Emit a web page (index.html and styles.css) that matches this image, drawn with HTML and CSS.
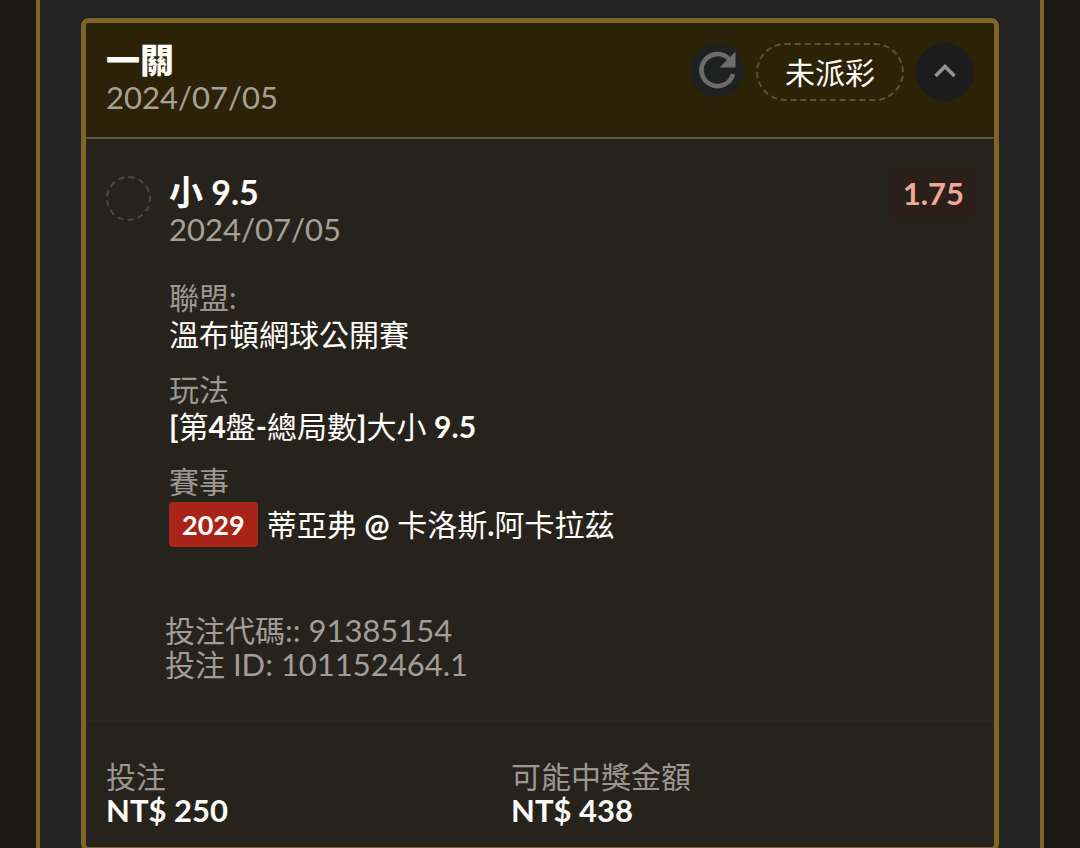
FILE: index.html
```html
<!DOCTYPE html>
<html lang="zh-Hant">
<head>
  <meta charset="UTF-8" />
  <meta name="viewport" content="width=device-width, initial-scale=1.0"/>
  <title>投注紀錄</title>
  <link rel="stylesheet" href="styles.css">
</head>
<body>
  <main class="panel">
    <article class="bet-card">
      <!-- Header -->
      <header class="bet-header">
        <div class="heading">
          <h2 class="title heavy">一關</h2>
          <time class="date" datetime="2024-07-05">2024/07/05</time>
        </div>
        <div class="actions">
          <button class="refresh" type="button" aria-label="重新整理">
            <svg width="40" height="40" viewBox="0 0 40 40">
              <path d="M36 24 A16 16 0 1 1 32.5 9.5" fill="none" stroke="#6c6c6e" stroke-width="4.6"/>
              <path d="M38.5 1.5 V17.5 H22.5 Z" fill="#6c6c6e"/>
            </svg>
          </button>
          <span class="status">未派彩</span>
          <button class="toggle" type="button" aria-label="收合">
            <svg width="24" height="16" viewBox="0 0 24 16">
              <path d="M2.5 12 L12 2.5 L21.5 12" fill="none" stroke="#949494" stroke-width="3.6"/>
            </svg>
          </button>
        </div>
      </header>

      <!-- Selection -->
      <section class="leg">
        <span class="marker"></span>
        <div class="leg-main">
          <div class="leg-top">
            <div class="heading">
              <h3 class="title">小 9.5</h3>
              <time class="date" datetime="2024-07-05">2024/07/05</time>
            </div>
            <span class="odds">1.75</span>
          </div>
          <dl class="fields">
            <div class="field">
              <dt>聯盟:</dt>
              <dd>溫布頓網球公開賽</dd>
            </div>
            <div class="field">
              <dt>玩法</dt>
              <dd><b>[</b>第<b>4</b>盤<b>-</b>總局數<b>]</b>大小 <b>9.5</b></dd>
            </div>
            <div class="field">
              <dt>賽事</dt>
              <dd class="match"><span class="badge">2029</span><span>蒂亞弗 <b>@</b> 卡洛斯<b>.</b>阿卡拉茲</span></dd>
            </div>
          </dl>
        </div>
      </section>
      <div class="codes">
        <p>投注代碼<span class="num">:: 91385154</span></p>
        <p>投注<span class="num"> ID: 101152464.1</span></p>
      </div>

      <!-- Totals -->
      <footer class="totals">
        <div>
          <p class="label">投注</p>
          <p class="amount">NT$ 250</p>
        </div>
        <div>
          <p class="label">可能中獎金額</p>
          <p class="amount">NT$ 438</p>
        </div>
      </footer>
    </article>
  </main>
</body>
</html>
```
FILE: styles.css
```css
* {
  box-sizing: border-box;
}

body {
  margin: 0;
  height: 100vh;
  overflow: hidden;
  background: #1c1912;
  color: #fdfcf8;
  font-family: Lato, "Noto Sans CJK TC", sans-serif;
  font-size: 30px;
  line-height: 37px;
}

h2, h3, p, dl, dd {
  margin: 0;
}

.panel {
  min-height: 100%;
  margin: 0 36px;
  padding: 18px 41px;
  border: solid #7f6527;
  border-width: 0 4px;
  background: #232323;
}

.bet-card {
  border: 5px solid #7f6527;
  border-radius: 8px;
  background: #26231d;
}

/* Header */
.bet-header {
  display: flex;
  justify-content: space-between;
  align-items: flex-start;
  padding: 18px 20px 21px;
  border-bottom: 2px solid #5d5541;
  border-radius: 3px 3px 0 0;
  background: #2c2207;
}

.title {
  font-size: 34px;
  line-height: 38px;
  font-weight: 700;
}

.heavy {
  font-weight: 900;
}

.num {
  font-size: 31px;
}

.date {
  display: block;
  color: #a6a198;
  font-size: 31px;
  line-height: 37px;
}

.actions {
  display: flex;
  align-items: flex-start;
  gap: 12px;
  padding-top: 2px;
}

.actions button {
  display: flex;
  justify-content: center;
  align-items: center;
  padding: 0;
  border: none;
  border-radius: 50%;
  cursor: pointer;
}

.refresh {
  width: 54px;
  height: 54px;
  background: #1f2020;
}

.status {
  height: 58px;
  padding: 0 27px;
  border: 2px dashed #5c5139;
  border-radius: 29px;
  line-height: 54px;
}

.toggle {
  width: 58px;
  height: 58px;
  background: #1c1c1c;
}

/* Selection */
.leg {
  display: flex;
  gap: 18px;
  padding: 34px 26px 0 20px;
}

.marker {
  flex: none;
  width: 45px;
  height: 45px;
  margin-top: 3px;
  border: 2px dashed #4e4a43;
  border-radius: 50%;
}

.leg-main {
  flex: 1;
  padding-bottom: 36px;
  border-bottom: 2px solid #292620;
}

.leg-top {
  display: flex;
  justify-content: space-between;
  align-items: flex-start;
}

.odds {
  margin: -6px -7px 0 0;
  padding: 8px 11px;
  background: #2a2019;
  color: #f0a698;
  font-size: 31px;
  font-weight: 700;
}

.fields {
  display: flex;
  flex-direction: column;
  gap: 18px;
  margin-top: 31px;
}

.field dt,
.label {
  color: #9c9891;
}

.match {
  display: flex;
  align-items: center;
  gap: 9px;
  margin-top: 2px;
}

.badge {
  padding: 4px 13px;
  border-radius: 4px;
  background: #a82419;
  font-size: 27px;
  font-weight: 700;
}

.codes {
  padding: 28px 20px 39px 79px;
  border-bottom: 2px solid #292722;
  color: #a29e97;
  line-height: 34px;
}

/* Totals */
.totals {
  display: grid;
  grid-template-columns: 7fr 8fr;
  padding: 37px 20px 20px;
  line-height: 34px;
}

.amount {
  font-size: 31px;
  font-weight: 700;
}
```
